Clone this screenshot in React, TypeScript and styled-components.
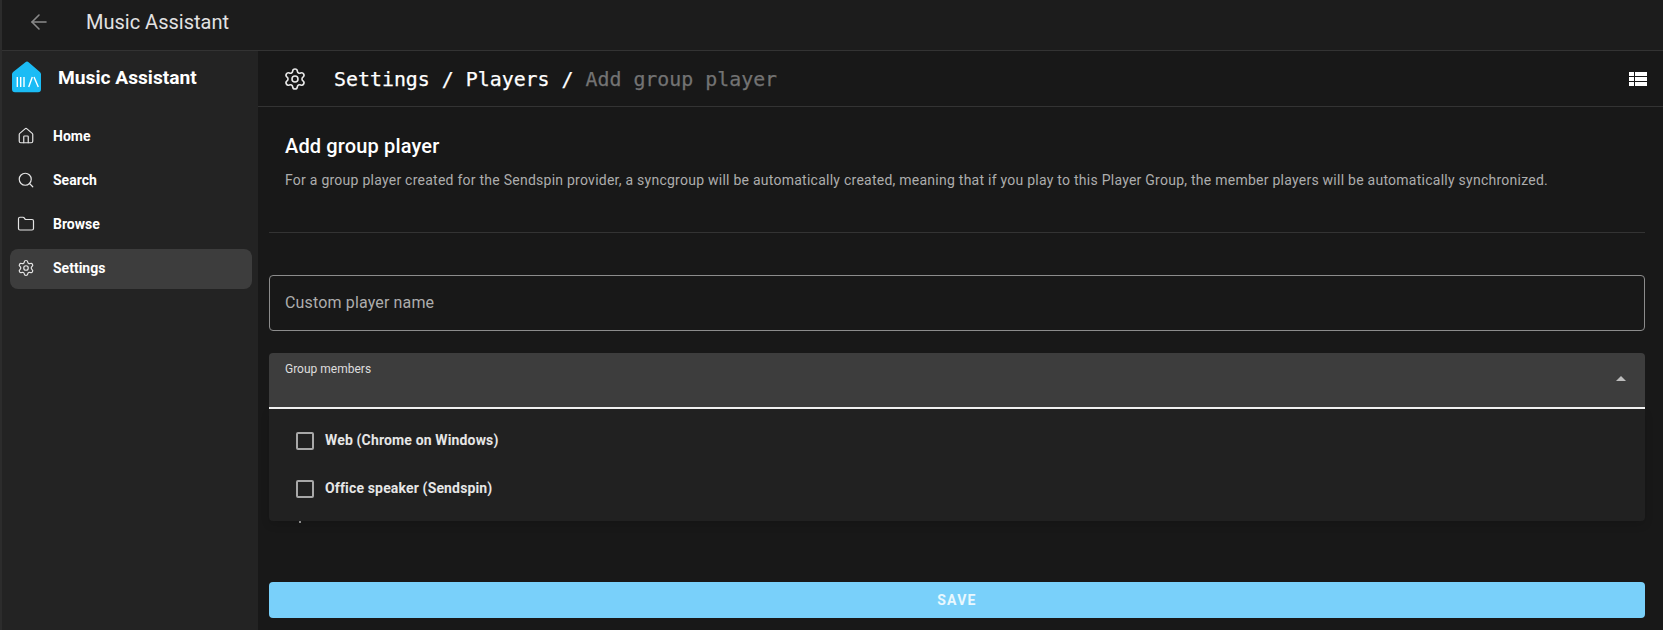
import React from "react";
import styled, { createGlobalStyle } from "styled-components";
import { Home, Search, Folder, Settings, ArrowLeft } from "lucide-react";

const Global = createGlobalStyle`
  html, body { margin: 0; padding: 0; background: #181818; }
  body { font-family: Roboto, "Liberation Sans", sans-serif; }
  * { box-sizing: border-box; }
`;

const Page = styled.div`
  width: 1663px;
  height: 630px;
  display: flex;
  flex-direction: column;
  overflow: hidden;
  background: #181818;
  color: #fff;
  border-left: 2px solid #2c2c2c;
`;

const TopBar = styled.header`
  height: 51px;
  flex: none;
  display: flex;
  align-items: center;
  background: #1c1c1c;
  border-bottom: 1px solid #333;
  padding: 0 0 6px 25px;
`;

const BackButton = styled.span`
  display: flex;
  color: #8a8a8a;
  width: 59px;
`;

const TopTitle = styled.h1`
  margin: 0;
  font-size: 20px;
  font-weight: 400;
  color: #e2e2e2;
`;

const Body = styled.div`
  flex: 1;
  display: flex;
  min-height: 0;
`;

const Sidebar = styled.nav`
  width: 256px;
  flex: none;
  background: #232323;
  padding: 10px 8px 0 8px;
`;

const Brand = styled.div`
  height: 44px;
  display: flex;
  align-items: flex-start;
  gap: 15px;
  padding-left: 1px;
  font-size: 19.2px;
  font-weight: 700;
`;

const BrandName = styled.span`
  margin-top: 6px;
  line-height: 22px;
`;

const NavList = styled.div`
  margin-top: 12px;
  display: flex;
  flex-direction: column;
  gap: 4px;
`;

const NavItem = styled.div<{ $active?: boolean }>`
  height: 40px;
  width: 242px;
  display: flex;
  align-items: center;
  gap: 18px;
  padding: 0 0 2px 7px;
  border-radius: 8px;
  font-size: 14px;
  font-weight: 700;
  background: ${(p) => (p.$active ? "#3d3d3d" : "transparent")};
  color: #fff;
  svg { color: #e4e4e4; flex: none; }
`;

const Main = styled.main`
  flex: 1;
  min-width: 0;
  display: flex;
  flex-direction: column;
`;

const Header = styled.div`
  height: 56px;
  flex: none;
  display: flex;
  align-items: center;
  padding: 0 16px 0 25px;
  border-bottom: 1px solid #333;
  gap: 27px;
`;

const Crumbs = styled.div`
  flex: 1;
  padding-top: 2px;
  font-family: "DejaVu Sans Mono", "Liberation Mono", monospace;
  font-size: 19.9px;
  color: #fff;
  white-space: pre;
  -webkit-text-stroke: 0.25px currentColor;
`;

const CrumbCurrent = styled.span`
  color: #737373;
`;

const Content = styled.div`
  padding: 0 18px 0 11px;
  display: flex;
  flex-direction: column;
`;

const Intro = styled.section`
  height: 126px;
  padding: 27px 16px 0 16px;
  border-bottom: 1px solid #333;
`;

const Heading = styled.h2`
  margin: 0;
  font-size: 20px;
  font-weight: 500;
  letter-spacing: 0.15px;
  line-height: 24px;
`;

const Description = styled.p`
  margin: 11px 0 0;
  font-size: 14px;
  letter-spacing: 0.25px;
  line-height: 22px;
  color: #adadad;
`;

const Form = styled.form`
  width: 1376px;
  margin-top: 42px;
  display: flex;
  flex-direction: column;
`;

const NameInput = styled.div`
  height: 56px;
  border: 1px solid #8c8c8c;
  border-radius: 4px;
  display: flex;
  align-items: center;
  padding: 0 0 2px 15px;
  font-size: 16px;
  letter-spacing: 0.15px;
  color: #adadad;
`;

const SelectWrap = styled.div`
  position: relative;
  margin-top: 22px;
`;

const SelectField = styled.div`
  height: 56px;
  background: #3d3d3d;
  border-radius: 4px 4px 0 0;
  border-bottom: 2px solid #f4f4f4;
  display: flex;
  justify-content: space-between;
  padding: 9px 19px 0 16px;
`;

const FloatLabel = styled.span`
  font-size: 12px;
  line-height: 15px;
  color: #dedede;
`;

const Caret = styled.span`
  width: 0;
  height: 0;
  margin-top: 14px;
  border-left: 5px solid transparent;
  border-right: 5px solid transparent;
  border-bottom: 5px solid #bdbdbd;
`;

const Menu = styled.div`
  position: absolute;
  left: 0;
  right: 0;
  top: 56px;
  height: 112px;
  background: #212121;
  border-radius: 0 0 4px 4px;
  padding-top: 8px;
  box-shadow: 0 4px 8px rgba(0, 0, 0, 0.12);
`;

const MenuItem = styled.div`
  height: 48px;
  display: flex;
  align-items: center;
  gap: 11px;
  padding-left: 27px;
  font-size: 14px;
  font-weight: 700;
  letter-spacing: 0.15px;
  color: #e6e6e6;
`;

const MenuLabel = styled.span`
  margin-top: -2px;
`;

const Check = styled.span`
  width: 18px;
  height: 18px;
  border: 2px solid #a8a8a8;
  border-radius: 2px;
  flex: none;
`;

const Speck = styled.span`
  position: absolute;
  left: 30px;
  top: 168px;
  width: 2px;
  height: 2px;
  background: #8a8a8a;
`;

const SaveButton = styled.button`
  margin-top: 173px;
  height: 36px;
  border: 0;
  border-radius: 4px;
  background: #79d0fa;
  color: #eaf8fe;
  font-family: Roboto, sans-serif;
  font-size: 14px;
  font-weight: 700;
  letter-spacing: 1.25px;
`;

const Logo = () => (
  <svg width="32" height="32" viewBox="0 0 32 32">
    <path
      d="M14.4 1.3a2.3 2.3 0 0 1 3.2 0l11.3 9.8c.7.6 1.1 1.4 1.1 2.3v14.8a3 3 0 0 1-3 3H4a3 3 0 0 1-3-3V13.4c0-.9.4-1.7 1.1-2.3z"
      fill="#1bbcf5"
    />
    <path
      d="M6.3 16v10M9.7 16v10M13 16v10M17.7 26l3.6-10M23 16l4.3 10"
      stroke="#fff"
      strokeWidth="1.4"
      fill="none"
    />
  </svg>
);

const ListIcon = () => (
  <svg width="18" height="14" viewBox="0 0 18 14" fill="#fff">
    <path d="M0 0h5v4H0zM6 0h12v4H6zM0 5h5v4H0zM6 5h12v4H6zM0 10h5v4H0zM6 10h12v4H6z" />
  </svg>
);

const nav = [
  { label: "Home", icon: Home },
  { label: "Search", icon: Search },
  { label: "Browse", icon: Folder },
  { label: "Settings", icon: Settings, active: true },
];

export default function App() {
  return (
    <Page>
      <Global />
      <TopBar>
        <BackButton>
          <ArrowLeft size={24} strokeWidth={1.6} />
        </BackButton>
        <TopTitle>Music Assistant</TopTitle>
      </TopBar>
      <Body>
        <Sidebar>
          <Brand>
            <Logo />
            <BrandName>Music Assistant</BrandName>
          </Brand>
          <NavList>
            {nav.map((n) => (
              <NavItem key={n.label} $active={n.active}>
                <n.icon size={18} strokeWidth={1.6} />
                {n.label}
              </NavItem>
            ))}
          </NavList>
        </Sidebar>
        <Main>
          <Header>
            <Settings size={24} strokeWidth={1.6} color="#e8e8e8" />
            <Crumbs>
              Settings / Players / <CrumbCurrent>Add group player</CrumbCurrent>
            </Crumbs>
            <ListIcon />
          </Header>
          <Content>
            <Intro>
              <Heading>Add group player</Heading>
              <Description>
                For a group player created for the Sendspin provider, a syncgroup will be automatically created, meaning that if you play to this Player Group, the member players will be automatically synchronized.
              </Description>
            </Intro>
            <Form>
              <NameInput>Custom player name</NameInput>
              <SelectWrap>
                <SelectField>
                  <FloatLabel>Group members</FloatLabel>
                  <Caret />
                </SelectField>
                <Menu>
                  <MenuItem>
                    <Check />
                    <MenuLabel>Web (Chrome on Windows)</MenuLabel>
                  </MenuItem>
                  <MenuItem>
                    <Check />
                    <MenuLabel>Office speaker (Sendspin)</MenuLabel>
                  </MenuItem>
                </Menu>
                <Speck />
              </SelectWrap>
              <SaveButton type="button">SAVE</SaveButton>
            </Form>
          </Content>
        </Main>
      </Body>
    </Page>
  );
}
